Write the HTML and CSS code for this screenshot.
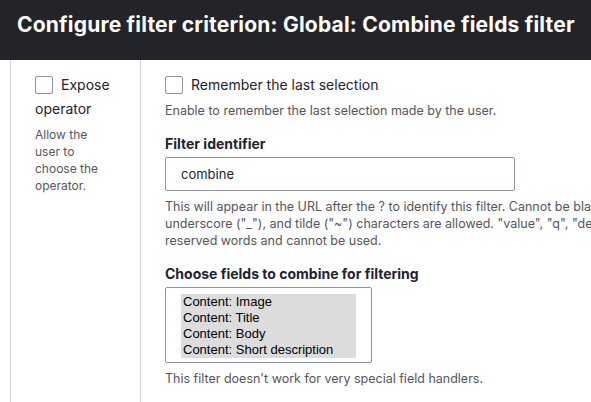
FILE: index.html
```html
<!DOCTYPE html>
<html lang="en">
<head>
<meta charset="utf-8">
<title>Configure filter criterion</title>
<link rel="stylesheet" href="styles.css">
</head>
<body>
<header class="dialog-title">Configure filter criterion: Global: Combine fields filter</header>
<main class="dialog-body">
  <section class="col col-left">
    <div class="check-line"><span class="checkbox"></span>Expose operator</div>
    <p class="desc desc-left">Allow the user to choose the operator.</p>
  </section>
  <section class="col col-right">
    <div class="check-line"><span class="checkbox"></span>Remember the last selection</div>
    <p class="desc desc-first">Enable to remember the last selection made by the user.</p>

    <label class="field-label">Filter identifier</label>
    <div class="text-input">combine</div>
    <p class="desc desc-field">This will appear in the URL after the ? to identify this filter. Cannot be blank. Only letters, digits, the dot ("."), hyphen ("-"),<br>underscore ("_"), and tilde ("~") characters are allowed. "value", "q", "destination", "_format", "_wrapper_format", "token" are<br>reserved words and cannot be used.</p>

    <label class="field-label label-second">Choose fields to combine for filtering</label>
    <div class="multi-select">
      <div class="options">
        <div class="option">Content: Image</div>
        <div class="option">Content: Title</div>
        <div class="option">Content: Body</div>
        <div class="option">Content: Short description</div>
      </div>
    </div>
    <p class="desc desc-field desc-last">This filter doesn't work for very special field handlers.</p>
  </section>
</main>
</body>
</html>
```
FILE: styles.css
```css
html, body {
  margin: 0;
  padding: 0;
  overflow: hidden;
  background: #ffffff;
}
body {
  font-family: Inter, "Noto Sans", sans-serif;
  color: #222330;
  width: 591px;
  height: 402px;
}
.dialog-title {
  height: 60px;
  box-sizing: border-box;
  background: #232429;
  color: #ffffff;
  font-size: 21px;
  font-weight: 700;
  line-height: 26px;
  letter-spacing: 0.2px;
  padding: 12px 0 0 17px;
  white-space: nowrap;
}
.dialog-body {
  display: flex;
  height: 342px;
  margin-left: 10px;
}
.col {
  border-left: 1px solid #d3d4d9;
  padding: 15px 0 0 24px;
  box-sizing: border-box;
}
.col-left {
  width: 130px;
  flex: none;
  padding-right: 30px;
}
.col-right {
  flex: none;
  width: 1200px;
}
.check-line {
  font-size: 14px;
  line-height: 24px;
  margin-top: -2px;
}
.checkbox {
  display: inline-block;
  width: 18px;
  height: 18px;
  box-sizing: border-box;
  border: 1px solid #8e929c;
  border-radius: 2px;
  vertical-align: -4px;
  margin-right: 8px;
}
.desc {
  margin: 0;
  font-size: 12.5px;
  line-height: 17px;
  color: #55565b;
}
.desc-left {
  margin-top: 5px;
  font-size: 12px;
}
.desc-first {
  margin-top: 5px;
}
.field-label {
  display: block;
  font-size: 14px;
  font-weight: 700;
  line-height: 18px;
  margin-top: 16px;
}
.label-second {
  margin-top: 16px;
}
.text-input {
  margin-top: 4px;
  width: 350px;
  height: 34px;
  box-sizing: border-box;
  border: 1px solid #8e929c;
  border-radius: 2px;
  padding: 0 15px;
  font-size: 13px;
  line-height: 32px;
  color: #222330;
}
.desc-field {
  margin-top: 7px;
  white-space: nowrap;
}
.multi-select {
  margin-top: 4px;
  width: 207px;
  height: 76px;
  box-sizing: border-box;
  border: 1px solid #8e929c;
  border-radius: 2px;
  padding: 6px 15px 0 15px;
}
.options {
  background: #dcdcdc;
}
.option {
  font-family: "Liberation Sans", Arial, sans-serif;
  font-size: 13px;
  line-height: 16px;
  padding-left: 2px;
  color: #000000;
}
```
